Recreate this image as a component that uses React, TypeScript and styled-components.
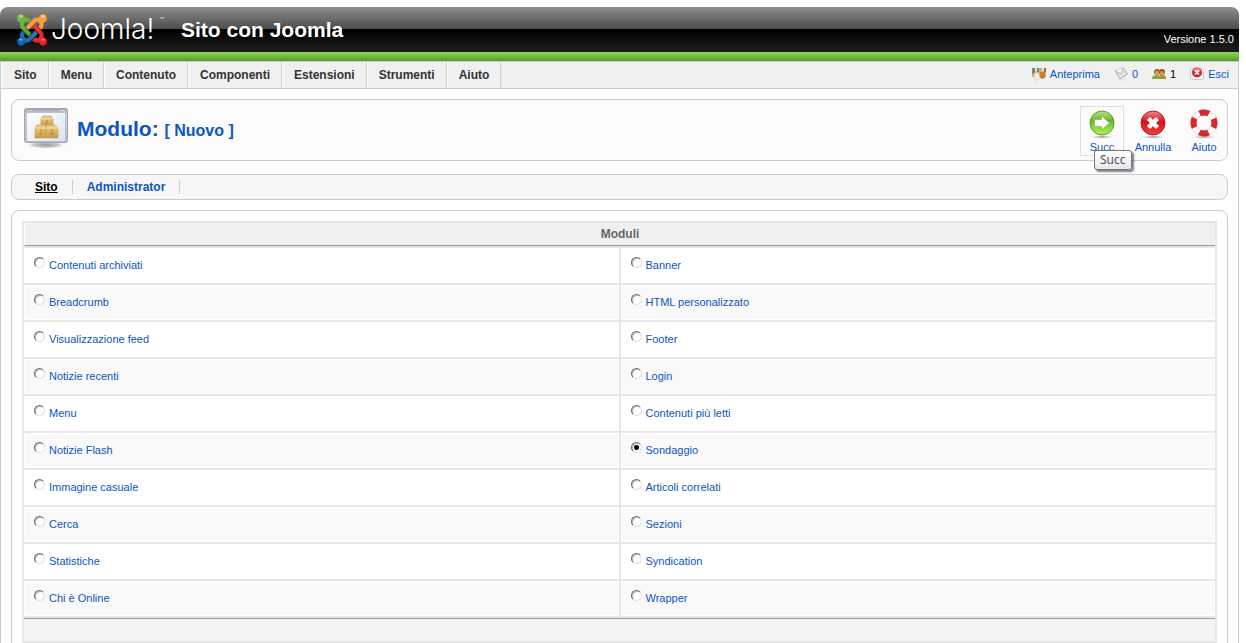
import React, { useState } from "react";
import styled, { createGlobalStyle } from "styled-components";

const GlobalStyle = createGlobalStyle`
  *, *::before, *::after { box-sizing: border-box; }
  body {
    margin: 0;
    background: #fff;
    color: #333;
    font: 11px/14px "Liberation Sans", Arial, Helvetica, sans-serif;
  }
  a { color: #0b55c4; text-decoration: none; }
  a:hover { text-decoration: underline; }
`;

const Page = styled.div`
  display: flex;
  flex-direction: column;
  height: 100vh;
  padding: 7px 7px 0 0;
  overflow-y: auto;
  scrollbar-width: none;
`;

const Header = styled.header`
  flex: none;
  display: flex;
  align-items: center;
  height: 54px;
  padding: 0 5px 9px 17px;
  border-radius: 8px 8px 0 0;
  background:
    linear-gradient(#8fd657, #579a2b) bottom / 100% 9px no-repeat,
    linear-gradient(#8e8e8e 0, #4c4c4c 22px, #000 22px, #1f1f1f 45px);
  color: #fff;
`;

const Wordmark = styled.span`
  position: relative;
  width: 112px;
  margin-left: 4px;
  padding-bottom: 2px;
  font: 300 28px/32px Inter, Lato, sans-serif;
`;

const Trademark = styled.span`
  position: absolute;
  top: 4px;
  right: -1px;
  font-size: 7px;
  line-height: 8px;
`;

const SiteName = styled.h1`
  flex: 1;
  margin: 0 0 0 18px;
  font-size: 21px;
  line-height: 26px;
`;

const Version = styled.span`
  align-self: flex-end;
  margin-bottom: 6px;
`;

const MenuBar = styled.div`
  flex: none;
  display: flex;
  justify-content: space-between;
  height: 28px;
  border: 1px solid #ccc;
  background: #f0f0f0;
`;

const MenuNav = styled.nav`
  display: flex;
`;

const MenuLink = styled.a`
  padding: 0 11px 0 12px;
  border-left: 1px solid #fff;
  border-right: 1px solid #d0d0d0;
  color: #333;
  font-weight: bold;
  font-size: 12px;
  line-height: 26px;
  & + & { padding-left: 11px; }
`;

const Status = styled.div`
  display: flex;
  align-items: center;
  gap: 14px;
  padding: 0 9px 2px 0;
`;

const StatusItem = styled.a<{ $plain?: boolean }>`
  display: flex;
  align-items: center;
  gap: 4px;
  ${(p) => p.$plain && "color: #000;"}
`;

const Content = styled.main`
  flex: 1 0 auto;
  padding: 10px;
  border: solid #ccc;
  border-width: 0 1px;
`;

const Panel = styled.section`
  border: 1px solid #ccc;
  border-radius: 8px;
`;

const TitlePanel = styled(Panel)`
  display: flex;
  align-items: center;
  height: 62px;
  padding-left: 12px;
  padding-right: 1px;
  background: #fbfbfb;
`;

const Title = styled.h2`
  flex: 1;
  margin: 0 0 0 9px;
  color: #0b55c4;
  font-size: 21px;
  line-height: 26px;
`;

const Subtitle = styled.small`
  font-size: 16px;
`;

const Tools = styled.div`
  display: flex;
  gap: 7px;
  padding-top: 2px;
`;

const ToolButton = styled.button<{ $hot?: boolean }>`
  position: relative;
  display: flex;
  flex-direction: column;
  align-items: center;
  width: 44px;
  height: 50px;
  padding: 0;
  border: 1px solid ${(p) => (p.$hot ? "#ddd" : "transparent")};
  background: none;
  color: #0b55c4;
  font: 11px/16px "Liberation Sans", Arial, sans-serif;
  cursor: pointer;
`;

const Tooltip = styled.span`
  position: absolute;
  top: 43px;
  left: 13px;
  padding: 0 5px;
  border: 1px solid #767676;
  border-radius: 3px;
  background: linear-gradient(#fff, #e6e7f0);
  box-shadow: 2px 2px 2px rgba(0, 0, 0, 0.5);
  color: #555;
  font: 12px/18px "Noto Sans", sans-serif;
`;

const SubNav = styled(Panel).attrs({ as: "nav" })`
  display: flex;
  align-items: center;
  height: 26px;
  margin: 13px 0 10px;
  padding-left: 9px;
  background: #f6f6f6;
`;

const SubLink = styled.a<{ $active?: boolean }>`
  padding: 0 14px;
  border-right: 1px solid #ccc;
  font-weight: bold;
  font-size: 12px;
  ${(p) => p.$active && "color: #000; text-decoration: underline;"}
`;

const ListPanel = styled(Panel)`
  padding: 10px;
`;

const ModuleTable = styled.table`
  width: 100%;
  table-layout: fixed;
  border-spacing: 2px;
  background: #e7e7e7;
`;

const HeadCell = styled.th`
  height: 23px;
  padding: 0;
  border-left: 1px solid #fff;
  border-bottom: 1px solid #999;
  background: #f0f0f0;
  color: #666;
  font-size: 12px;
`;

const Cell = styled.td<{ $alt: boolean }>`
  height: 35px;
  padding: 0 9px 2px;
  border: 1px solid #fff;
  background: ${(p) => (p.$alt ? "#f9f9f9" : "#fff")};
`;

const FootCell = styled.td`
  height: 23px;
  padding: 0;
  border-top: 1px solid #999;
  background: #f3f3f3;
`;

const Choice = styled.label`
  display: flex;
  align-items: center;
  gap: 4px;
  color: #0b55c4;
  cursor: pointer;
`;

const Radio = styled.input`
  appearance: none;
  width: 11px;
  height: 11px;
  margin: 0 0 4px;
  border: 1px solid;
  border-color: #6c6c6c #e0e0e0 #e0e0e0 #6c6c6c;
  border-radius: 50%;
  background: #fff;
  box-shadow: inset 1px 1px 0 #bbb;
  &:checked {
    background: radial-gradient(circle, #000 0 2px, #fff 3px);
  }
`;

const JoomlaLogo = () => (
  <svg width="30" height="32" viewBox="0 28 448 456" preserveAspectRatio="none" aria-hidden="true">
    <defs>
      <linearGradient id="lg" x1="0" y1="0" x2="1" y2="1"><stop stopColor="#7cc044" /><stop offset="1" stopColor="#4aa02c" /></linearGradient>
      <linearGradient id="lo" x1="1" y1="0" x2="0" y2="1"><stop stopColor="#ff9a35" /><stop offset="1" stopColor="#f9a04c" /></linearGradient>
      <linearGradient id="lr" x1="0" y1="0" x2="1" y2="1"><stop stopColor="#ee3a34" /><stop offset="1" stopColor="#dd1c22" /></linearGradient>
      <linearGradient id="lb" x1="1" y1="0" x2="0" y2="1"><stop stopColor="#2a7dbf" /><stop offset="1" stopColor="#0b62aa" /></linearGradient>
    </defs>
    <path fill="url(#lb)" d="M312.1 307.6l-44-44.3c-87 86.4-50.4 50.4-99.7 99.8-14.3 14.3-37.6 14.3-51.9 0-13.1-13.4-16.9-35.3 3.2-55.4l-44-44.3c-30.2 30.2-38 65.2-29.5 98.3-26.7 6-46.2 29.9-46.2 58.2C0 453.2 26.8 480 59.8 480c28.6 0 52.5-19.8 58.6-46.7 32.7 8.2 68.5-.6 94.2-26 32.1-32.2 12.2-12.2 99.5-99.7z" />
    <path fill="url(#lg)" d="M.6 92.1C.6 58.8 27.4 32 60.4 32c30 0 54.5 21.9 59.2 50.2 32.6-7.6 67.1.6 96.5 30l-44.3 44.3c-20.5-20.5-42.6-16.3-55.4-3.5-14.3 14.3-14.3 37.9 0 52.2l99.5 99.5-44 44.3c-87.7-87.2-49.7-49.7-99.8-99.7-26.8-26.5-35-64.8-24.8-98.9C20.4 144.6.6 120.7.6 92.1z" />
    <path fill="url(#lo)" d="M130.1 208.5l44.3 44.3c10-10 89.7-89.7 99.7-99.8 14.3-14.3 37.6-14.3 51.9 0 12.8 12.8 17 35-3.5 55.4l44 44.3c31.2-31.2 38.5-67.6 28.9-101.2 29.2-4.1 51.9-29.2 51.9-59.5 0-33.2-26.8-60.1-59.8-60.1-30.3 0-55.4 22.5-59.5 51.6-33.8-9.9-71.7-1.5-98.3 25.1-18.3 19.1-71.1 71.5-99.6 99.9z" />
    <path fill="url(#lr)" d="M396.4 360.7c8.2-32.7-.9-68.5-26.3-93.9-11.8-12.2 5 4.7-99.5-99.7l-44.3 44.3 99.7 99.7c14.3 14.3 14.3 37.6 0 51.9-12.8 12.8-35 17-55.4-3.5l-44 44.3c27.6 30.2 68 38.8 102.7 28 5.5 27.4 29.7 48.1 58.9 48.1 33 0 59.8-26.8 59.8-60.1 0-30.2-22.5-55-51.6-59.1z" />
    <g fill="#fff" opacity=".4">
      <ellipse cx="58" cy="62" rx="34" ry="18" />
      <ellipse cx="388" cy="62" rx="34" ry="18" />
      <ellipse cx="58" cy="394" rx="30" ry="14" />
      <ellipse cx="388" cy="394" rx="30" ry="14" />
    </g>
  </svg>
);

const PreviewIcon = () => (
  <svg width="14" height="14" viewBox="0 0 14 14" aria-hidden="true">
    <rect y="1" width="14" height="9" fill="#c3b393" />
    <path d="M0 1h3v6H0zM5 1h2v4H5z" fill="#6f8f74" />
    <path d="M3 1h2v3H3zM10 1h2v3h-2z" fill="#ece4cf" />
    <path d="M8 5h5v6l-3 1-3-2z" fill="#cf7d2c" />
    <path d="M12 1h2v4h-2z" fill="#a0643c" />
    <path d="M2 7c1-2 3-2 5 0l1 3-2 3H3z" fill="#f6eee2" stroke="#c9b79b" strokeWidth=".5" />
  </svg>
);

const MailIcon = () => (
  <svg width="14" height="14" viewBox="0 0 14 14" aria-hidden="true">
    <path d="M1 4l8-3 4.500 6L6 12z" fill="#e4e4e4" stroke="#a9a9a9" />
    <path d="M1 4l6.500 3L9 1" fill="#f6f6f6" stroke="#b5b5b5" />
    <path d="M4 13h6l2-2" fill="none" stroke="#ddd" />
  </svg>
);

const UsersIcon = () => (
  <svg width="14" height="14" viewBox="0 0 14 14" aria-hidden="true">
    <path d="M6 11c0-4 8-4 8 0v1H6z" fill="#b98a35" />
    <circle cx="10" cy="5" r="3" fill="#8d5218" />
    <circle cx="10" cy="6" r="2" fill="#d99a52" />
    <path d="M0 11c0-4 9-4 9 0v1H0z" fill="#7fb23a" />
    <circle cx="5" cy="5" r="3" fill="#9b6224" />
    <circle cx="5" cy="6" r="2" fill="#dda35e" />
  </svg>
);

const LogoutIcon = () => (
  <svg width="14" height="14" viewBox="0 0 14 14" aria-hidden="true">
    <rect x=".5" y="1.500" width="13" height="11" rx="1" fill="#f4f5fa" stroke="#c5c9d8" />
    <circle cx="7" cy="5.500" r="5" fill="#dc2424" />
    <ellipse cx="7" cy="3" rx="3.500" ry="2" fill="#f08080" />
    <path d="M5 3.500l4 4M9 3.500l-4 4" stroke="#fff" strokeWidth="1.700" />
  </svg>
);

const ModuleIcon = () => (
  <svg width="44" height="44" viewBox="0 0 44 44" aria-hidden="true">
    <defs>
      <linearGradient id="mf" x1="0" y1="0" x2="0" y2="1"><stop stopColor="#9a9eaa" /><stop offset=".15" stopColor="#c9cdd9" /><stop offset="1" stopColor="#b4b9cc" /></linearGradient>
      <linearGradient id="mp" x1="0" y1="0" x2="1" y2="1"><stop stopColor="#fff" /><stop offset="1" stopColor="#dde2f0" /></linearGradient>
      <linearGradient id="mb" x1="0" y1="0" x2="0" y2="1"><stop stopColor="#edcf86" /><stop offset="1" stopColor="#c99c45" /></linearGradient>
      <radialGradient id="ms"><stop stopColor="#999" /><stop offset=".6" stopColor="#c8c8c8" /><stop offset="1" stopColor="#fff" stopOpacity="0" /></radialGradient>
    </defs>
    <ellipse cx="22" cy="37" rx="21" ry="4" fill="url(#ms)" />
    <rect x=".5" y=".5" width="43" height="34" rx="2" fill="url(#mf)" stroke="#a2a6b4" />
    <path d="M3 2.500h2M6 2.500h2M36 2.500h5" stroke="#d4d7e0" />
    <rect x="3" y="5" width="38" height="28" fill="url(#mp)" />
    <g fill="url(#mb)" stroke="#c39c50" strokeWidth=".6">
      <path d="M17 11l2-3h8l2 3v8H17z" />
      <path d="M11 20l2-3h9v13H11z" />
      <path d="M22 17h9l3 3v10H22z" />
    </g>
    <path d="M17 11h12M11 20h23" stroke="#f7e2aa" />
    <path d="M23 12v5M21 15l2 2 2-2M17 21v6M15 25l2 2 2-2M28 21v6M26 25l2 2 2-2" fill="none" stroke="#b78d3d" />
  </svg>
);

const ToolDefs = () => (
  <defs>
    <radialGradient id="ts"><stop stopColor="#777" /><stop offset="1" stopColor="#fff" stopOpacity="0" /></radialGradient>
    <linearGradient id="tg" x1="0" y1="0" x2="0" y2="1"><stop stopColor="#b9e08c" /><stop offset=".4" stopColor="#68b82a" /><stop offset="1" stopColor="#b4f25c" /></linearGradient>
    <linearGradient id="tr" x1="0" y1="0" x2="0" y2="1"><stop stopColor="#f08a8a" /><stop offset=".45" stopColor="#d3131c" /><stop offset="1" stopColor="#ee4040" /></linearGradient>
  </defs>
);

const NextIcon = () => (
  <svg width="32" height="32" viewBox="0 0 32 32" aria-hidden="true">
    <ToolDefs />
    <ellipse cx="16" cy="30" rx="14" ry="2" fill="url(#ts)" />
    <circle cx="16" cy="16" r="12" fill="url(#tg)" stroke="#58a01c" />
    <path d="M8.500 12.500h7V9l8 7-8 7v-3.500h-7z" fill="#fff" stroke="#6eb832" strokeWidth=".6" />
  </svg>
);

const CancelIcon = () => (
  <svg width="32" height="32" viewBox="0 0 32 32" aria-hidden="true">
    <ellipse cx="16" cy="30" rx="14" ry="2" fill="url(#ts)" />
    <circle cx="16" cy="16" r="12" fill="url(#tr)" stroke="#b81a20" />
    <path d="M11.500 11.500l9 9M20.500 11.500l-9 9" stroke="#fff" strokeWidth="4.500" />
  </svg>
);

const HelpIcon = () => (
  <svg width="32" height="32" viewBox="0 0 32 32" aria-hidden="true">
    <ellipse cx="16" cy="30" rx="14" ry="2" fill="url(#ts)" />
    <circle cx="16" cy="16" r="10.500" fill="none" stroke="#c8c8c8" strokeWidth="6" />
    <circle cx="16" cy="16" r="10.500" fill="none" stroke="#fafafa" strokeWidth="5" />
    <circle cx="16" cy="16" r="10.500" fill="none" stroke="#d8262a" strokeWidth="6" strokeDasharray="9.500 6.993" strokeDashoffset="4.750" />
  </svg>
);

const menu = ["Sito", "Menu", "Contenuto", "Componenti", "Estensioni", "Strumenti", "Aiuto"];

const modules = [
  ["Contenuti archiviati", "Banner"],
  ["Breadcrumb", "HTML personalizzato"],
  ["Visualizzazione feed", "Footer"],
  ["Notizie recenti", "Login"],
  ["Menu", "Contenuti più letti"],
  ["Notizie Flash", "Sondaggio"],
  ["Immagine casuale", "Articoli correlati"],
  ["Cerca", "Sezioni"],
  ["Statistiche", "Syndication"],
  ["Chi è Online", "Wrapper"],
];

export default function App() {
  const [selected, setSelected] = useState("Sondaggio");
  return (
    <Page>
      <GlobalStyle />
      <Header>
        <JoomlaLogo />
        <Wordmark>Joomla!<Trademark>™</Trademark></Wordmark>
        <SiteName>Sito con Joomla</SiteName>
        <Version>Versione 1.5.0</Version>
      </Header>
      <MenuBar>
        <MenuNav>
          {menu.map((m) => <MenuLink key={m} href="#">{m}</MenuLink>)}
        </MenuNav>
        <Status>
          <StatusItem href="#"><PreviewIcon />Anteprima</StatusItem>
          <StatusItem href="#"><MailIcon />0</StatusItem>
          <StatusItem as="span" $plain><UsersIcon />1</StatusItem>
          <StatusItem href="#"><LogoutIcon />Esci</StatusItem>
        </Status>
      </MenuBar>
      <Content>
        <TitlePanel>
          <ModuleIcon />
          <Title>Modulo: <Subtitle>[ Nuovo ]</Subtitle></Title>
          <Tools>
            <ToolButton type="button" $hot><NextIcon />Succ<Tooltip role="tooltip">Succ</Tooltip></ToolButton>
            <ToolButton type="button"><CancelIcon />Annulla</ToolButton>
            <ToolButton type="button"><HelpIcon />Aiuto</ToolButton>
          </Tools>
        </TitlePanel>
        <SubNav>
          <SubLink href="#" $active>Sito</SubLink>
          <SubLink href="#">Administrator</SubLink>
        </SubNav>
        <ListPanel>
          <ModuleTable>
            <thead>
              <tr><HeadCell colSpan={2}>Moduli</HeadCell></tr>
            </thead>
            <tbody>
              {modules.map((row, i) => (
                <tr key={row[0]}>
                  {row.map((name) => (
                    <Cell key={name} $alt={i % 2 === 1}>
                      <Choice>
                        <Radio
                          type="radio"
                          name="module"
                          checked={selected === name}
                          onChange={() => setSelected(name)}
                        />
                        {name}
                      </Choice>
                    </Cell>
                  ))}
                </tr>
              ))}
            </tbody>
            <tfoot>
              <tr><FootCell colSpan={2} /></tr>
            </tfoot>
          </ModuleTable>
        </ListPanel>
      </Content>
    </Page>
  );
}
